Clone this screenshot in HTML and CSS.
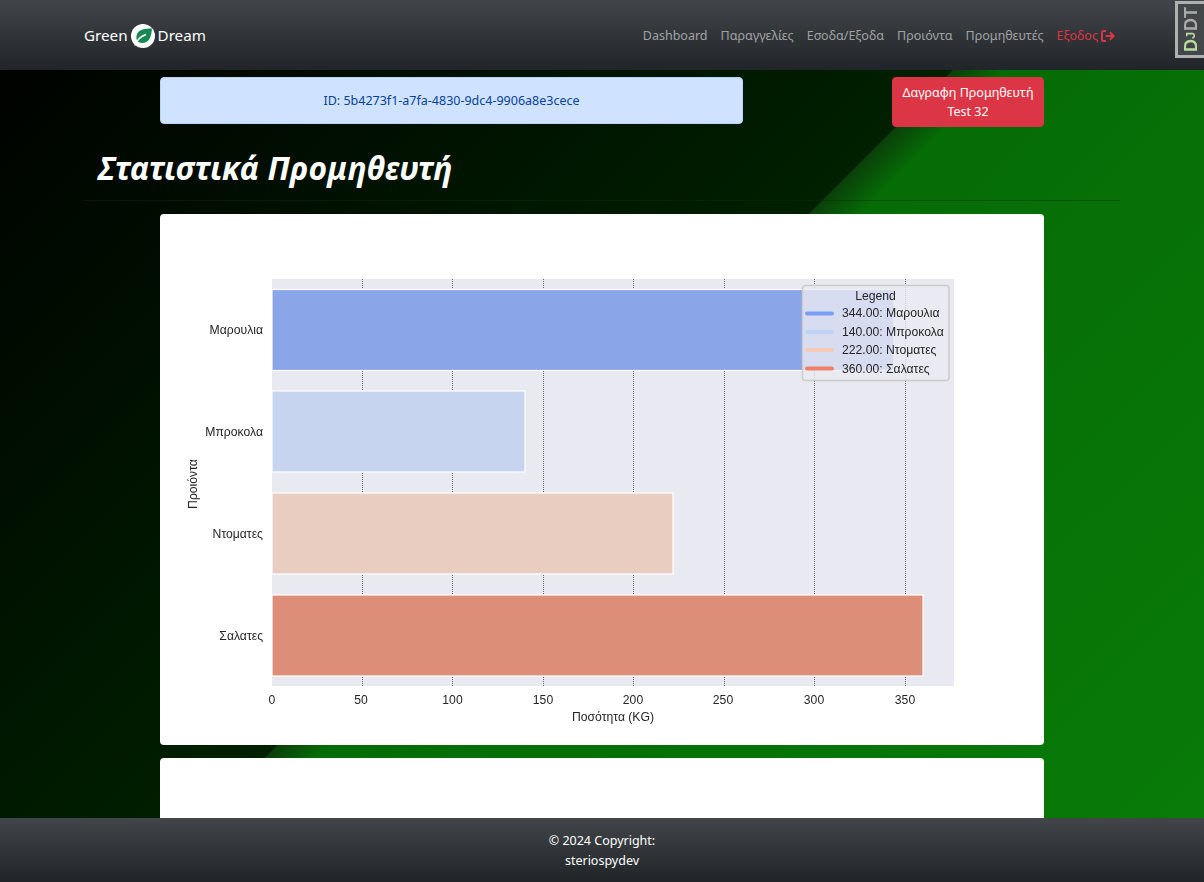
FILE: index.html
```html
<!DOCTYPE html>
<html lang="el">
<head>
    <meta charset="UTF-8">
    <meta name="viewport" content="width=device-width, initial-scale=1.0">
    <title>Στατιστικά Προμηθευτή</title>
    <link rel="stylesheet" href="styles.css">
</head>
<body>

<header class="topbar">
    <a class="brand" href="#">
        <span>Green</span>
        <svg class="brand-logo" viewBox="0 0 24 24" width="24" height="24">
            <circle cx="12" cy="12" r="12" fill="#fff"/>
            <path d="M21 4.500C14 4.500 8 5.500 6 10C4.800 13 5.500 16 6.500 17.500C10 20 16 19.500 18.500 15C20.500 11.500 21 4.500 21 4.500Z" fill="#198754"/>
            <path d="M4 21.500C6 15.500 9 12.500 15 10.500" fill="none" stroke="#fff" stroke-width="1.500"/>
        </svg>
        <span>Dream</span>
    </a>
    <nav class="nav-links">
        <a href="#">Dashboard</a>
        <a href="#">Παραγγελίες</a>
        <a href="#">Εσοδα/Εξοδα</a>
        <a href="#">Προιόντα</a>
        <a href="#">Προμηθευτές</a>
        <a class="logout" href="#">Εξοδος
            <svg viewBox="0 0 14 12" width="14" height="12">
                <path d="M5 1H2.500C1.600 1 1 1.600 1 2.500V9.500C1 10.400 1.600 11 2.500 11H5" fill="none" stroke="#dc3545" stroke-width="2"/>
                <path d="M4.500 6H12.500M9 2.300L12.700 6L9 9.700" fill="none" stroke="#dc3545" stroke-width="2"/>
            </svg>
        </a>
    </nav>
</header>

<main class="page">
    <div class="content">
        <div class="top-row">
            <div class="alert-id">ID: 5b4273f1-a7fa-4830-9dc4-9906a8e3cece</div>
            <button class="btn-delete">Δαγραφη Προμηθευτή<br>Test 32</button>
        </div>
    </div>

    <h1 class="page-title">Στατιστικά Προμηθευτή</h1>
    <hr class="title-rule">

    <div class="content">
        <div class="card">
            <svg class="chart" viewBox="160 214 884 531" width="884" height="531">
                <rect x="272" y="279" width="682" height="407" fill="#e9e9f1"/>
                <g stroke="#6a6a6a" stroke-width="1" stroke-dasharray="1 1">
                    <line x1="362.500" y1="279" x2="362.500" y2="686"/>
                    <line x1="452.500" y1="279" x2="452.500" y2="686"/>
                    <line x1="543.500" y1="279" x2="543.500" y2="686"/>
                    <line x1="633.500" y1="279" x2="633.500" y2="686"/>
                    <line x1="724.500" y1="279" x2="724.500" y2="686"/>
                    <line x1="814.500" y1="279" x2="814.500" y2="686"/>
                    <line x1="905.500" y1="279" x2="905.500" y2="686"/>
                </g>
                <g stroke="#fff" stroke-width="1.200">
                    <rect x="272" y="289.500" width="622" height="81" fill="#8aa5e8"/>
                    <rect x="272" y="391" width="253" height="81" fill="#c6d4ef"/>
                    <rect x="272" y="493" width="401" height="81" fill="#e9cdc0"/>
                    <rect x="272" y="595" width="651" height="81" fill="#dc8e78"/>
                </g>
                <g class="tick" text-anchor="end">
                    <text x="263" y="334">Μαρουλια</text>
                    <text x="263" y="436">Μπροκολα</text>
                    <text x="263" y="538">Ντοματες</text>
                    <text x="263" y="640">Σαλατες</text>
                </g>
                <g class="tick" text-anchor="middle">
                    <text x="272" y="704">0</text>
                    <text x="361" y="704">50</text>
                    <text x="452.500" y="704">100</text>
                    <text x="543" y="704">150</text>
                    <text x="633" y="704">200</text>
                    <text x="723" y="704">250</text>
                    <text x="814" y="704">300</text>
                    <text x="905" y="704">350</text>
                    <text x="613" y="721">Ποσότητα (KG)</text>
                    <text transform="translate(197 484) rotate(-90)">Προιόντα</text>
                </g>
                <rect x="802.500" y="285.500" width="146.500" height="95" rx="3" fill="#eaeaf2" fill-opacity=".8" stroke="#ccc" stroke-width="1.500"/>
                <g class="tick">
                    <text x="875.500" y="300" text-anchor="middle">Legend</text>
                    <text x="842" y="317">344.00: Μαρουλια</text>
                    <text x="842" y="336">140.00: Μπροκολα</text>
                    <text x="842" y="354">222.00: Ντοματες</text>
                    <text x="842" y="373">360.00: Σαλατες</text>
                </g>
                <g stroke-width="4" stroke-linecap="round">
                    <line x1="807" y1="313.500" x2="832" y2="313.500" stroke="#7b9ef5"/>
                    <line x1="807" y1="332" x2="832" y2="332" stroke="#bcd3f5"/>
                    <line x1="807" y1="350" x2="832" y2="350" stroke="#f5c9b5"/>
                    <line x1="807" y1="368.500" x2="832" y2="368.500" stroke="#f08068"/>
                </g>
            </svg>
        </div>
        <div class="card card-empty"></div>
    </div>
</main>

<footer class="bottombar">
    <div>© 2024 Copyright:</div>
    <div>steriospydev</div>
</footer>

<a class="djdt-handle" href="#"><span class="djdt-green">D<small>J</small></span>DT</a>

</body>
</html>
```

FILE: styles.css
```css
html, body {
    margin: 0;
    height: 100%;
}

body {
    display: flex;
    flex-direction: column;
    overflow: hidden;
    font-family: "Noto Sans", "Open Sans", sans-serif;
    font-size: 12.500px;
    line-height: 19.500px;
    color: #fff;
    background: linear-gradient(135deg, #000 0%, #002000 49%, #0a3f0a 49.05%, #066c06 51.5%, #087c08 100%);
}

a {
    text-decoration: none;
    color: inherit;
}

/* header */
.topbar {
    flex: none;
    height: 70px;
    box-sizing: border-box;
    display: flex;
    align-items: center;
    justify-content: space-between;
    padding: 1px 89px 0 84px;
    background: #212529 linear-gradient(180deg, rgba(255, 255, 255, .15), rgba(255, 255, 255, 0));
}

.brand {
    display: flex;
    align-items: center;
    gap: 3px;
    font-size: 15.200px;
    color: #fff;
}

.nav-links {
    display: flex;
    align-items: center;
    gap: 13px;
}

.nav-links a {
    color: rgba(255, 255, 255, .55);
}

.nav-links .logout {
    display: flex;
    align-items: center;
    gap: 3px;
    color: #dc3545;
}

/* main part */
.page {
    flex: 1;
    min-height: 0;
    overflow: hidden;
    width: 1036px;
    margin: 0 auto;
    padding-top: 7px;
}

.content {
    width: 884px;
    margin: 0 auto;
}

.top-row {
    display: flex;
    justify-content: space-between;
    align-items: flex-start;
}

.alert-id {
    width: 583px;
    height: 47px;
    box-sizing: border-box;
    display: flex;
    align-items: center;
    justify-content: center;
    color: #084298;
    background: #cfe2ff;
    border: 1px solid #b6d4fe;
    border-radius: 4px;
}

.btn-delete {
    width: 152px;
    height: 50px;
    padding: 0;
    font: inherit;
    color: #fff;
    background: #dc3545;
    border: 1px solid #dc3545;
    border-radius: 4px;
}

.page-title {
    margin: 0;
    padding: 18px 0 0 14px;
    font-size: 31.800px;
    line-height: 46px;
    font-style: italic;
    font-weight: 700;
    color: #fff;
}

.title-rule {
    margin: 9px 0 13px;
    border: 0;
    border-top: 1px solid rgba(10, 45, 10, .5);
}

.card {
    height: 531px;
    background: #fff;
    border-radius: 4px;
    margin-bottom: 13px;
    overflow: hidden;
}

.card-empty {
    height: 200px;
}

/* the chart is a scaled picture in the original, so it is a bit soft */
.chart {
    display: block;
    filter: blur(.35px);
}

.tick text {
    font-family: "Liberation Sans", Arial, sans-serif;
    font-size: 12.200px;
    fill: #262626;
}

/* footer */
.bottombar {
    flex: none;
    height: 64px;
    box-sizing: border-box;
    padding-top: 13px;
    text-align: center;
    background: #212529 linear-gradient(180deg, rgba(255, 255, 255, .15), rgba(255, 255, 255, 0));
}

/* debug toolbar handle */
.djdt-handle {
    position: fixed;
    top: 1px;
    right: 0;
    width: 29px;
    height: 57px;
    box-sizing: border-box;
    display: flex;
    align-items: center;
    justify-content: center;
    writing-mode: vertical-rl;
    transform: rotate(180deg);
    font-family: "Liberation Sans", sans-serif;
    font-size: 18px;
    font-weight: 700;
    line-height: 1;
    color: #aaa;
    background: #44474a;
    border: 3px solid #b0b0b0;
    border-left-width: 0;
}

.djdt-green {
    color: #b8d8a0;
}

.djdt-green small {
    font-size: 13px;
}
```
